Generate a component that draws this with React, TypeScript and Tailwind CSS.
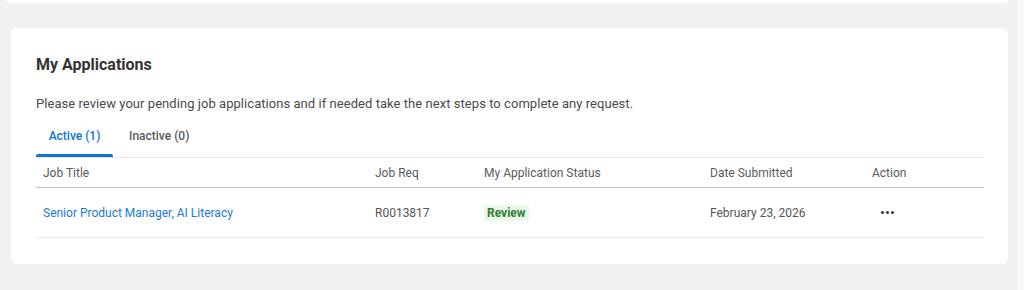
import React from "react";

export default function App() {
  return (
    <div className="flex h-[290px] w-[1024px] overflow-hidden bg-[#f0f1f2]" style={{ fontFamily: "Roboto, 'Liberation Sans', sans-serif" }}>
      <div className="flex flex-1 flex-col">
        <div className="ml-[7px] mr-[9px] h-[3px] rounded-b-[6px] bg-white" />
        <div className="ml-[11px] mr-[9px] mt-[25px] h-[236px] rounded-[6px] bg-white pl-[25px] pr-[24px] pt-[24px]">
          <h2 className="text-[16px] font-bold leading-[26px] text-[#333333]">My Applications</h2>
          <p className="mt-[17px] text-[13px] leading-[18px] tracking-[0.05px] text-[#4a4a4a]">
            Please review your pending job applications and if needed take the next steps to complete any request.
          </p>
          <div className="mt-[10px] flex border-b border-[#e6e6e6]">
            <div className="flex w-[77px] flex-col items-center">
              <span className="pt-[5px] text-[12px] font-medium leading-[16px] text-[#0b74da]">Active (1)</span>
              <span className="mt-[10px] h-[3px] w-full rounded-t-[2px] bg-[#0b74da]" />
            </div>
            <div className="flex flex-col items-center px-[16px]">
              <span className="pt-[5px] text-[12px] font-medium leading-[16px] text-[#5a5a5a]">Inactive (0)</span>
            </div>
          </div>
          <div className="flex h-[30px] items-center border-b border-[#bdbdbd] text-[12px] text-[#5a5a5a]">
            <div className="w-[339px] pl-[7px]">Job Title</div>
            <div className="w-[109px]">Job Req</div>
            <div className="w-[226px]">My Application Status</div>
            <div className="w-[162px]">Date Submitted</div>
            <div>Action</div>
          </div>
          <div className="flex h-[50px] items-center border-b border-[#ececec] text-[12px] text-[#555555]">
            <div className="w-[339px] pl-[7px] text-[#1c7ad6]">Senior Product Manager, AI Literacy</div>
            <div className="w-[109px]">R0013817</div>
            <div className="w-[226px]">
              <span className="inline-block rounded-[2px] bg-[#eaf8ea] px-[3px] py-[1px] text-[12px] font-bold leading-[14px] text-[#2f7d32]">Review</span>
            </div>
            <div className="w-[162px]">February 23, 2026</div>
            <div className="flex gap-[2px] pl-[9px]">
              <span className="h-[3px] w-[3px] rounded-full bg-[#333]" />
              <span className="h-[3px] w-[3px] rounded-full bg-[#333]" />
              <span className="h-[3px] w-[3px] rounded-full bg-[#333]" />
            </div>
          </div>
        </div>
      </div>
      <div className="w-[7px] bg-[#f6f7f8]" />
    </div>
  );
}
